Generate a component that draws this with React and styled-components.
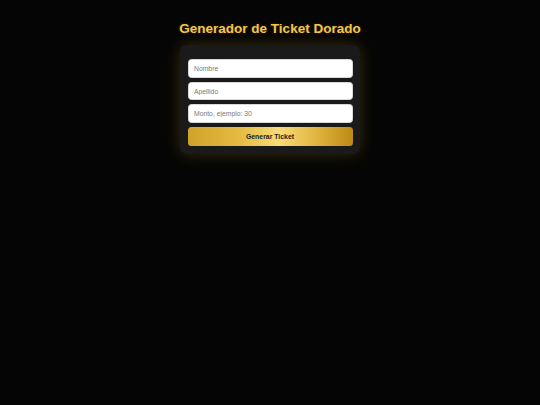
import React from "react";
import styled, { createGlobalStyle } from "styled-components";

const GlobalStyle = createGlobalStyle`
  html, body {
    margin: 0;
    padding: 0;
    background: #050505;
  }
  body {
    font-family: "Liberation Sans", Arial, sans-serif;
    min-height: 405px;
  }
`;

const Page = styled.div`
  display: flex;
  flex-direction: column;
  align-items: center;
  padding-top: 20.5px;
  min-height: 405px;
  box-sizing: border-box;
  background: #050505;
`;

const Title = styled.h1`
  margin: 0 0 9px;
  font-size: 13.5px;
  font-weight: 700;
  line-height: 15.5px;
  color: #f3c64c;
  text-shadow: 0 0 3px rgba(255, 200, 60, 0.2);
`;

const Card = styled.form`
  width: 180px;
  box-sizing: border-box;
  padding: 14px 7.5px 8px;
  background: #1a1a1a;
  border-radius: 7px;
  box-shadow: 0 0 16px rgba(255, 200, 50, 0.2);
  display: flex;
  flex-direction: column;
  gap: 4px;
`;

const Field = styled.input`
  height: 18.7px;
  box-sizing: border-box;
  width: 100%;
  padding: 0 5.5px;
  border: 0.7px solid #d8d8d8;
  border-radius: 3.5px;
  background: #fff;
  font-family: "Liberation Sans", Arial, sans-serif;
  font-size: 6.8px;
  color: #222;
  outline: none;
  &::placeholder {
    color: #7a7a7a;
  }
`;

const Button = styled.button`
  height: 19px;
  width: 100%;
  border: none;
  border-radius: 3.5px;
  background: linear-gradient(90deg, #d1a22a 0%, #e3ba3f 30%, #f8dc78 55%, #deb03a 80%, #bd8a14 100%);
  font-family: "Liberation Sans", Arial, sans-serif;
  font-size: 6.9px;
  font-weight: 700;
  color: #1a1a1a;
  cursor: pointer;
  padding: 0;
`;

export default function App() {
  return (
    <>
      <GlobalStyle />
      <Page>
        <Title>Generador de Ticket Dorado</Title>
        <Card onSubmit={e => e.preventDefault()}>
          <Field type="text" placeholder="Nombre" />
          <Field type="text" placeholder="Apellido" />
          <Field type="number" placeholder="Monto, ejemplo: 30" />
          <Button type="submit">Generar Ticket</Button>
        </Card>
      </Page>
    </>
  );
}
